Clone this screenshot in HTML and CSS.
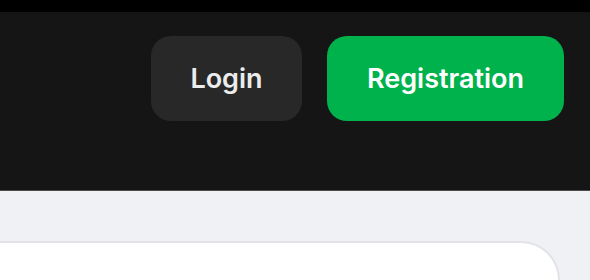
FILE: index.html
```html
<!DOCTYPE html>
<html>
<head>
<meta charset="utf-8">
<link rel="stylesheet" href="styles.css">
</head>
<body>
<div class="topbar"></div>
<header class="header">
  <button class="btn btn-login">Login</button>
  <button class="btn btn-reg">Registration</button>
</header>
<main class="main">
  <div class="card"></div>
</main>
</body>
</html>
```
FILE: styles.css
```css
html, body {
  margin: 0;
  padding: 0;
  background: #f0f1f5;
  font-family: Inter, "Noto Sans", sans-serif;
}
body {
  height: 280px;
  overflow: hidden;
}
.topbar {
  height: 12px;
  background: #000;
}
.header {
  height: 179px;
  background: #151515;
  border-bottom: 1px solid #4a4a4a;
  display: flex;
  justify-content: flex-end;
  align-items: flex-start;
  gap: 25px;
  padding: 24px 26px 0 0;
  box-sizing: border-box;
}
.btn {
  height: 85px;
  border: none;
  border-radius: 20px;
  font-family: Inter, "Noto Sans", sans-serif;
  font-weight: 600;
  font-size: 27px;
  color: #ececec;
  padding: 0;
}
.btn-login {
  width: 151px;
  background: #282828;
}
.btn-reg {
  width: 237px;
  background: #00b24c;
  color: #ffffff;
}
.main {
  padding-top: 50px;
  height: 89px;
  box-sizing: border-box;
}
.card {
  width: 562px;
  height: 39px;
  margin-left: -2px;
  background: #fff;
  border: 2px solid #e2e3e8;
  border-bottom: none;
  border-radius: 0 40px 0 0;
  box-sizing: border-box;
}
```
